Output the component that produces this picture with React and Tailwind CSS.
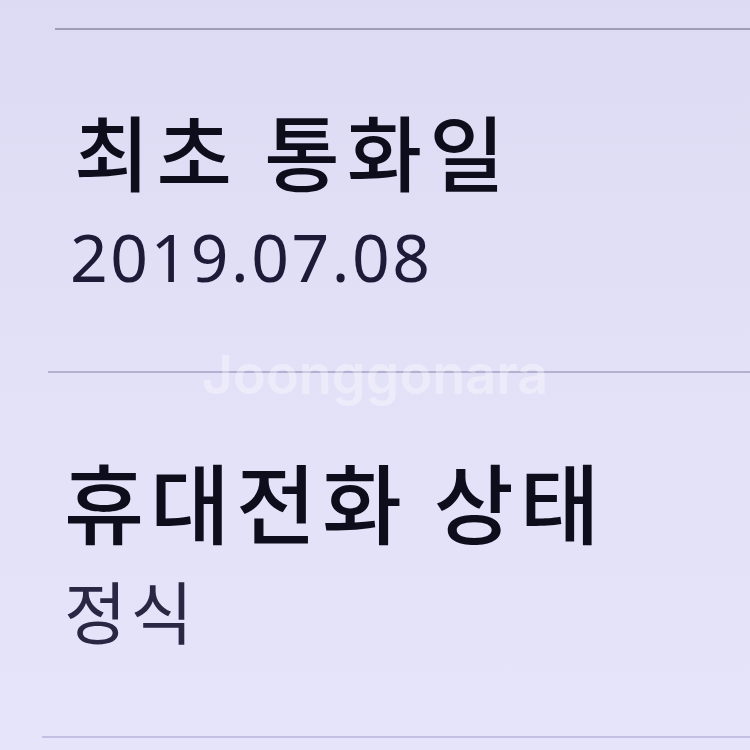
export default function App() {
  return (
    <div className="relative w-[750px] h-[750px] overflow-hidden bg-gradient-to-b from-[#dddbf3] via-[#e3e1f8] to-[#e6e4fb]">
      <div className="h-[28px]" />
      <div className="ml-[55px] h-[2px] bg-[#9f9cb8]" />
      <div className="ml-[74px] mt-[79px] text-[82px] leading-none text-[#0e0d1c] font-medium tracking-[7px] whitespace-nowrap" style={{ fontFamily: '"Noto Sans CJK KR", "Noto Sans", sans-serif' }}>
        최초 통화일
      </div>
      <div className="ml-[70px] mt-[32px] text-[66px] leading-none text-[#1d1b38] tracking-[2.5px]" style={{ fontFamily: '"Noto Sans", Roboto, sans-serif' }}>
        2019.07.08
      </div>
      <div className="ml-[48px] mt-[82px] h-[2px] bg-[#b3b0d2]" />
      <div className="ml-[64px] mt-[84px] text-[87px] leading-none text-[#0e0d1c] font-medium tracking-[6px] whitespace-nowrap" style={{ fontFamily: '"Noto Sans CJK KR", "Noto Sans", sans-serif' }}>
        휴대전화 상태
      </div>
      <div className="ml-[64px] mt-[32px] text-[68px] leading-none text-[#2a2745] tracking-[4px]" style={{ fontFamily: '"Noto Sans CJK KR", "Noto Sans", sans-serif' }}>
        정식
      </div>
      <div className="ml-[42px] mt-[92px] h-[2px] bg-[#c2bfe2]" />
      <div className="absolute left-0 right-0 top-[334px] flex justify-center pointer-events-none">
        <span className="text-[54px] font-semibold text-white/35" style={{ fontFamily: 'Inter, "Noto Sans", sans-serif' }}>
          Joonggonara
        </span>
      </div>
    </div>
  );
}
